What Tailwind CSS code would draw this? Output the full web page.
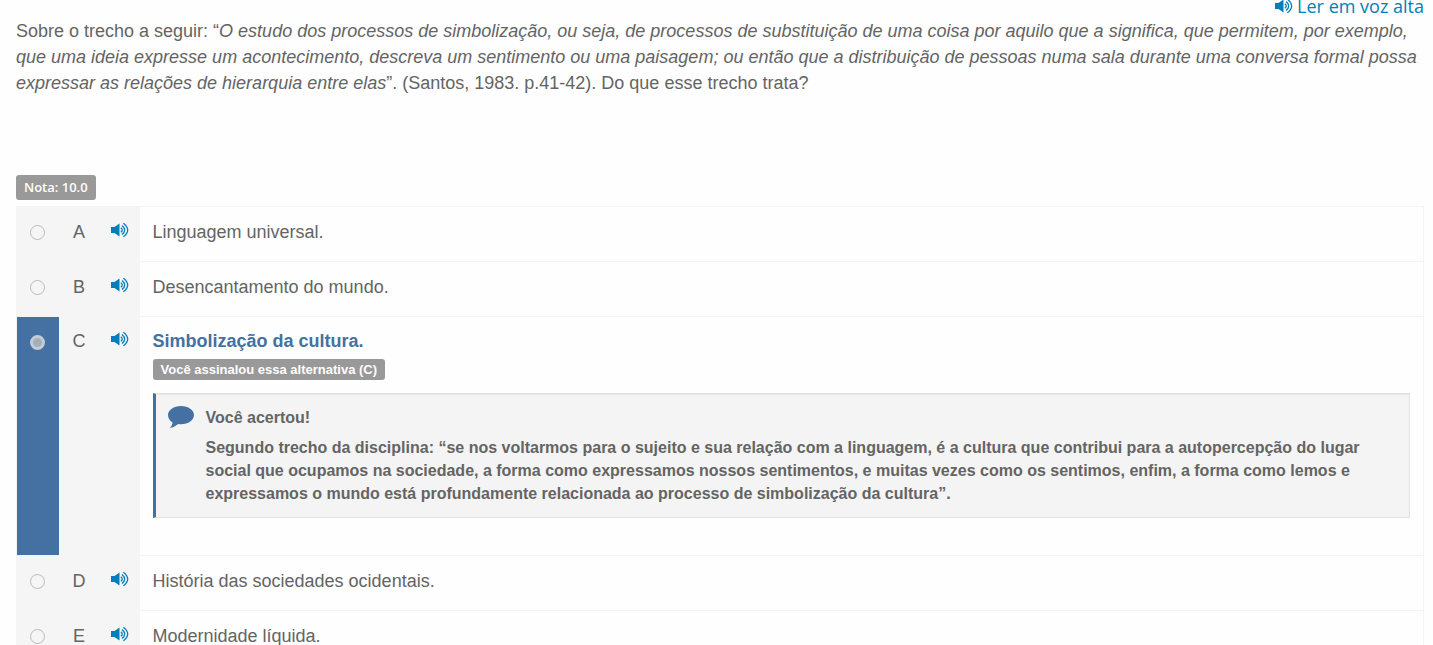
<!DOCTYPE html>
<html lang="pt-BR">
<head>
    <meta charset="UTF-8">
    <meta name="viewport" content="width=device-width, initial-scale=1.0">
    <script src="https://cdn.jsdelivr.net/npm/@tailwindcss/browser@4"></script>
    <title>Questão</title>
</head>
<body class="h-screen overflow-hidden bg-[#fefefe] pl-4 pr-[9px] font-['Liberation_Sans',Arial,sans-serif] text-lg text-[#646464]">
    <!-- icons shared by the page -->
    <svg class="hidden">
        <symbol id="volume" viewBox="0 0 18 16">
            <path fill="currentColor" d="M0 5h3.500L8.500 1.500v13L3.500 11H0z"/>
            <g fill="none" stroke="currentColor" stroke-width="1.300">
                <path d="M9.800 5.700q3 2.300 0 4.600"/>
                <path d="M11 3.400q5.400 4.600 0 9.200"/>
                <path d="M12.400 1.200q8.600 6.800 0 13.600"/>
            </g>
        </symbol>
        <symbol id="comment" viewBox="0 0 26 22">
            <path fill="currentColor" d="M13 0C20.200 0 26 4 26 9s-5.800 9.300-13 9.300q-1.400 0-2.700-.2Q7 21.200 1.600 21.900q2.600-2 3-5.200Q0 13.700 0 9C0 4 5.800 0 13 0z"/>
        </symbol>
    </svg>

    <header class="mb-[6px] flex h-3 items-center justify-end">
        <a href="#" class="flex items-center gap-1 font-['Open_Sans',sans-serif] leading-6 text-[#007fba]">
            <svg class="h-4 w-[18px]"><use href="#volume"/></svg>
            Ler em voz alta
        </a>
    </header>

    <main>
        <p class="leading-[26px]">Sobre o trecho a seguir: “<em>O estudo dos processos de simbolização, ou seja, de processos de substituição de uma coisa por aquilo que a significa, que permitem, por exemplo, que uma ideia expresse um acontecimento, descreva um sentimento ou uma paisagem; ou então que a distribuição de pessoas numa sala durante uma conversa formal possa expressar as relações de hierarquia entre elas</em>”. (Santos, 1983. p.41-42). Do que esse trecho trata?</p>

        <div class="mt-[79px] flex">
            <span class="rounded-[3px] bg-[#999] px-2 font-['Open_Sans',sans-serif] text-[13px] leading-[25px] font-semibold text-[#fefefe]">Nota: 10.0</span>
        </div>

        <table class="mt-[6px] w-full border-collapse border border-[#f4f4f4] leading-6">
            <tbody class="align-top">
                <tr class="h-[55px] border-b border-[#f4f4f4]">
                    <td class="w-[42px] bg-[#f5f5f5] pt-[18px]"><input type="radio" name="alternativa" id="a" class="mx-auto block size-[15px] appearance-none rounded-full border border-[#bbb]"></td>
                    <td class="w-[41px] bg-[#f5f5f5] pt-[13px] text-center"><label for="a">A</label></td>
                    <td class="w-10 bg-[#f5f5f5] pt-[15px]"><button aria-label="Ouvir alternativa A" class="mx-auto block text-[#007fba]"><svg class="h-4 w-[18px]"><use href="#volume"/></svg></button></td>
                    <td class="px-[13px] pt-[13px]">Linguagem universal.</td>
                </tr>
                <tr class="h-[55px] border-b border-[#f4f4f4]">
                    <td class="bg-[#f5f5f5] pt-[18px]"><input type="radio" name="alternativa" id="b" class="mx-auto block size-[15px] appearance-none rounded-full border border-[#bbb]"></td>
                    <td class="bg-[#f5f5f5] pt-[13px] text-center"><label for="b">B</label></td>
                    <td class="bg-[#f5f5f5] pt-[15px]"><button aria-label="Ouvir alternativa B" class="mx-auto block text-[#007fba]"><svg class="h-4 w-[18px]"><use href="#volume"/></svg></button></td>
                    <td class="px-[13px] pt-[13px]">Desencantamento do mundo.</td>
                </tr>
                <tr class="border-b border-[#f4f4f4]">
                    <td class="bg-[#4471a1] pt-[18px]"><input type="radio" name="alternativa" id="c" checked class="mx-auto block size-[15px] appearance-none rounded-full border-3 border-[#c2cbd6] bg-[#a5afba]"></td>
                    <td class="bg-[#f5f5f5] pt-3 text-center"><label for="c">C</label></td>
                    <td class="bg-[#f5f5f5] pt-[14px]"><button aria-label="Ouvir alternativa C" class="mx-auto block text-[#007fba]"><svg class="h-4 w-[18px]"><use href="#volume"/></svg></button></td>
                    <td class="px-[13px] pt-3 pb-[37px] font-bold">
                        <p class="text-[#4471a1]">Simbolização da cultura.</p>
                        <div class="mt-[6px] flex">
                            <span class="rounded-[3px] bg-[#999] px-2 text-[13px] leading-[21px] text-[#fefefe]">Você assinalou essa alternativa (C)</span>
                        </div>
                        <div class="mt-[13px] flex gap-3 border border-l-3 border-[#e2e2e2] border-l-[#4471a1] bg-[#f4f4f4] py-3 pr-8 pl-3 text-base leading-6 inset-shadow-2xs">
                            <svg class="h-[22px] w-[26px] shrink-0 text-[#4471a1]"><use href="#comment"/></svg>
                            <div>
                                <p>Você acertou!</p>
                                <p class="mt-[6px] leading-[23px]">Segundo trecho da disciplina: “se nos voltarmos para o sujeito e sua relação com a linguagem, é a cultura que contribui para a autopercepção do lugar social que ocupamos na sociedade, a forma como expressamos nossos sentimentos, e muitas vezes como os sentimos, enfim, a forma como lemos e expressamos o mundo está profundamente relacionada ao processo de simbolização da cultura”.</p>
                            </div>
                        </div>
                    </td>
                </tr>
                <tr class="h-[55px] border-b border-[#f4f4f4]">
                    <td class="bg-[#f5f5f5] pt-[18px]"><input type="radio" name="alternativa" id="d" class="mx-auto block size-[15px] appearance-none rounded-full border border-[#bbb]"></td>
                    <td class="bg-[#f5f5f5] pt-[13px] text-center"><label for="d">D</label></td>
                    <td class="bg-[#f5f5f5] pt-[15px]"><button aria-label="Ouvir alternativa D" class="mx-auto block text-[#007fba]"><svg class="h-4 w-[18px]"><use href="#volume"/></svg></button></td>
                    <td class="px-[13px] pt-[13px]">História das sociedades ocidentais.</td>
                </tr>
                <tr class="h-[55px]">
                    <td class="bg-[#f5f5f5] pt-[18px]"><input type="radio" name="alternativa" id="e" class="mx-auto block size-[15px] appearance-none rounded-full border border-[#bbb]"></td>
                    <td class="bg-[#f5f5f5] pt-[13px] text-center"><label for="e">E</label></td>
                    <td class="bg-[#f5f5f5] pt-[15px]"><button aria-label="Ouvir alternativa E" class="mx-auto block text-[#007fba]"><svg class="h-4 w-[18px]"><use href="#volume"/></svg></button></td>
                    <td class="px-[13px] pt-[13px]">Modernidade líquida.</td>
                </tr>
            </tbody>
        </table>
    </main>
</body>
</html>
